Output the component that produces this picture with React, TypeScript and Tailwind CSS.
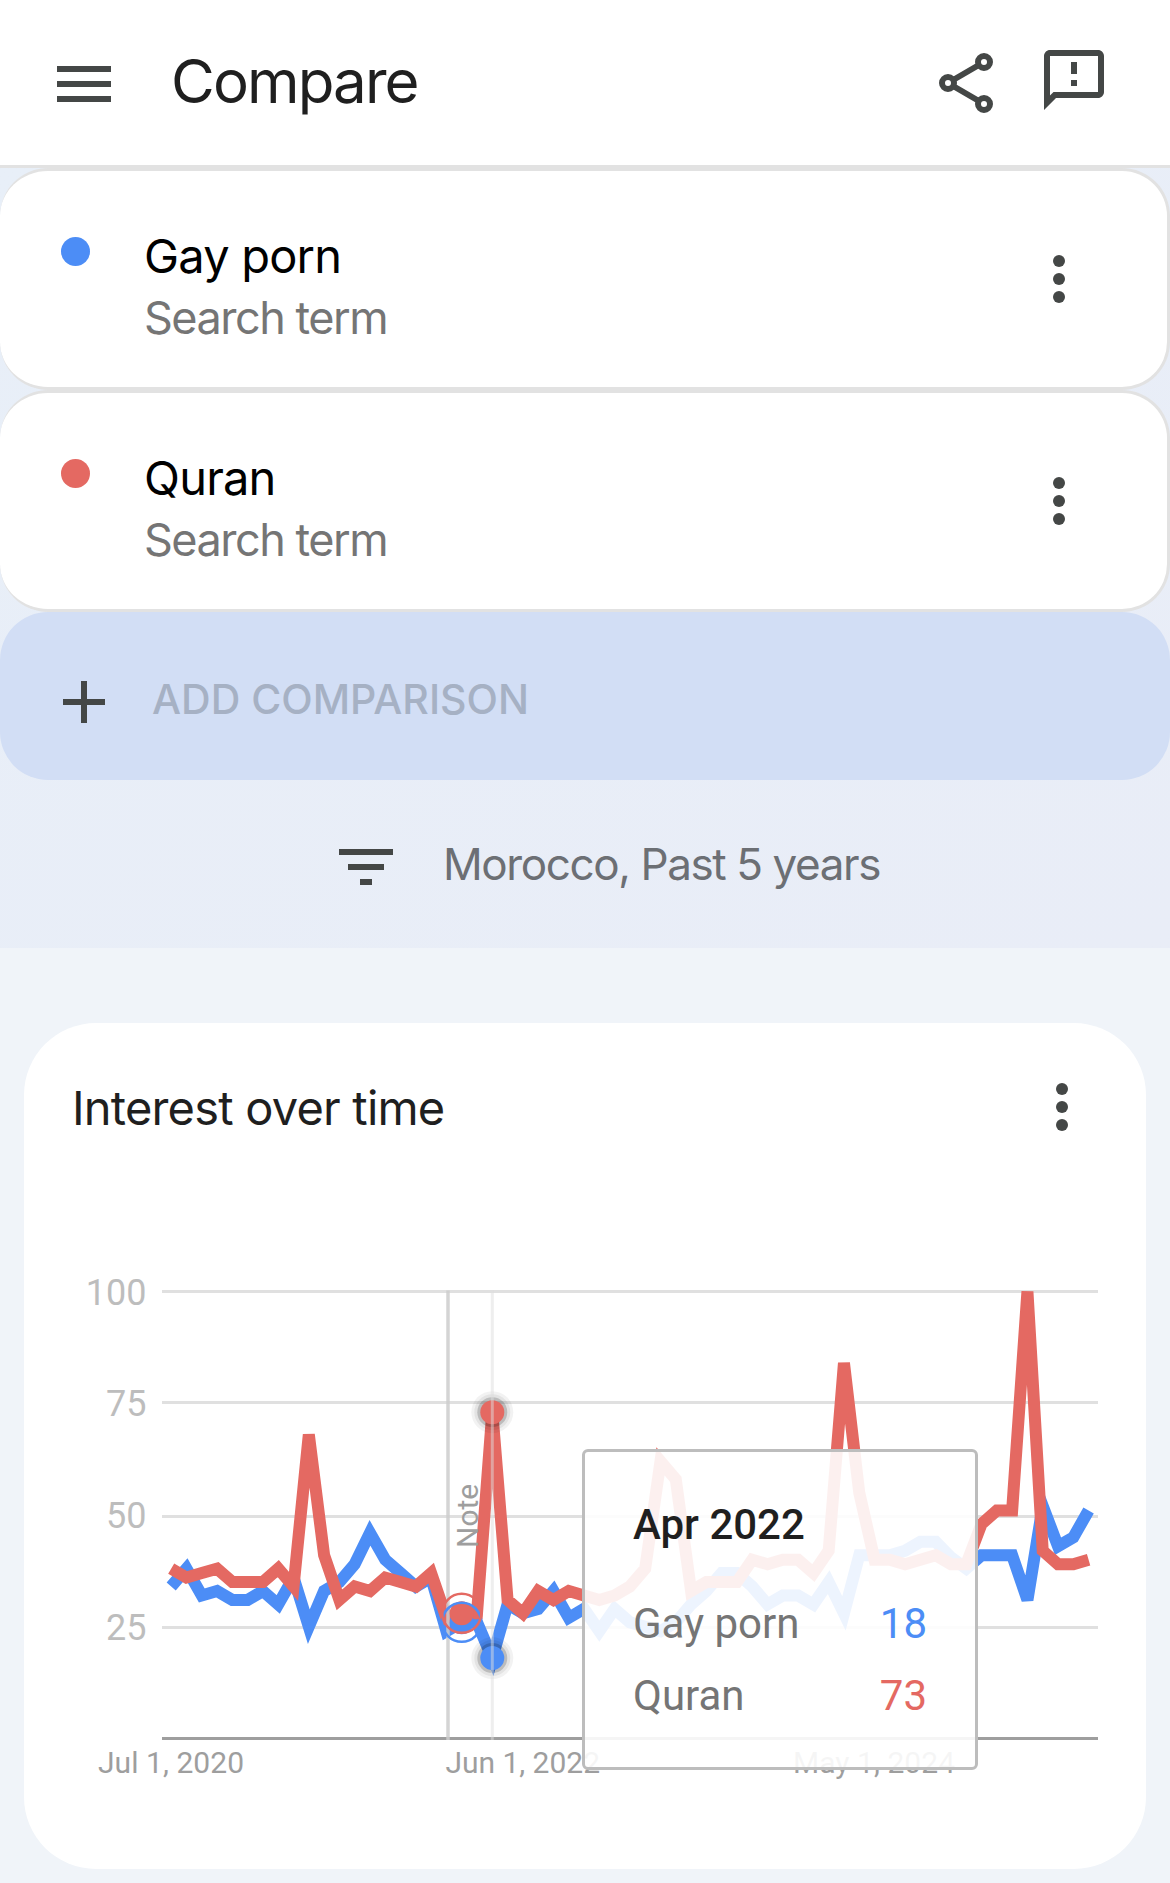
import React, { ReactNode } from 'react';

interface Term {
  name: string;
  dot: string;
}

const BLUE = '#4c8df6';
const RED = '#e46962';

const terms: Term[] = [
  { name: 'Gay porn', dot: 'bg-[#4c8df6]' },
  { name: 'Quran', dot: 'bg-[#e46962]' },
];

// Monthly values, Jul 2020 - Jul 2025
const blueSeries = [
  34, 38, 32, 33, 31, 31, 33, 30, 36, 25, 33, 35, 39, 46, 40, 37, 34, 36, 24, 26,
  26, 18, 30, 28, 29, 33, 27, 29, 24, 29, 26, 25, 24, 26, 30, 33, 37, 37, 34, 30,
  32, 32, 30, 35, 28, 41, 41, 41, 42, 44, 44, 40.5, 38, 41, 41, 41, 31, 52, 43, 45, 51,
];
const redSeries = [
  38, 36, 37, 38, 35, 35, 35, 38, 34, 68, 41, 31, 34, 33, 36, 35, 34, 37, 27, 28,
  28, 73, 31, 28, 33, 31, 33, 32, 31, 32, 34, 38, 62, 58, 33, 35, 35, 35, 40, 39,
  40, 40, 37, 42, 84, 55, 40, 40, 39, 40, 41, 39, 39, 48, 51, 51, 100, 42, 39, 39, 40,
];

const gridLines = [
  { label: '100', y: 31.5, text: 45 },
  { label: '75', y: 142.5, text: 156 },
  { label: '50', y: 256.5, text: 268 },
  { label: '25', y: 367.5, text: 380 },
];

const px = (i: number) => 147.2 + i * 15.29;
const py = (v: number) => 478.5 - v * 4.47;
const toPoints = (series: number[]) => series.map((v, i) => `${px(i)},${py(v)}`).join(' ');

function Icon({ children }: { children: ReactNode }) {
  return (
    <svg className="size-[72px] shrink-0" viewBox="0 0 24 24" fill="#444746">
      {children}
    </svg>
  );
}

function MoreIcon() {
  return (
    <Icon>
      <circle cx="12" cy="6" r="2" />
      <circle cx="12" cy="12" r="2" />
      <circle cx="12" cy="18" r="2" />
    </Icon>
  );
}

function Header() {
  return (
    <header className="flex h-[168px] items-start border-b-[3px] border-[#e2e2e2] bg-white pl-12 pr-15">
      <button className="mt-12" aria-label="Menu">
        <Icon>
          <path d="M3 6h18v2H3zM3 11h18v2H3zM3 16h18v2H3z" />
        </Icon>
      </button>
      <h1 className="ml-[51px] mt-[45px] text-[60px] leading-[72px] tracking-[-1.9px] text-[#1f1f1f]">Compare</h1>
      <div className="ml-auto flex items-start gap-9">
        <button className="mt-[47px]" aria-label="Share">
          <Icon>
            <g fill="none" stroke="#444746" strokeWidth="2">
              <path d="M7.7 11l8.6-5M7.7 13l8.6 5" />
              <circle cx="18" cy="5" r="2" />
              <circle cx="6" cy="12" r="2" />
              <circle cx="18" cy="19" r="2" />
            </g>
          </Icon>
        </button>
        <button className="mt-11" aria-label="Feedback">
          <Icon>
            <path d="M20 2H4c-1.1 0-2 .9-2 2v18l4-4h14c1.1 0 2-.9 2-2V4c0-1.1-.9-2-2-2zm0 14H5.17L4 17.17V4h16v12zM11 6h2v4h-2zM11 12h2v2h-2z" />
          </Icon>
        </button>
      </div>
    </header>
  );
}

function TermCard({ term }: { term: Term }) {
  return (
    <div className="flex h-[222px] items-start rounded-[48px] border-y-[3px] border-r-[3px] border-[#e2e2e2] bg-white pl-[61px] pr-18">
      <span className={`mt-[66px] size-[29px] rounded-full ${term.dot}`} />
      <div className="ml-[54px] mt-[54px]">
        <div className="text-[47px] leading-[62px] tracking-[-0.8px] text-black">{term.name}</div>
        <div className="text-[45px] leading-[62px] tracking-[-1.5px] text-[#757575]">Search term</div>
      </div>
      <button className="ml-auto mt-18" aria-label="More options">
        <MoreIcon />
      </button>
    </div>
  );
}

function Marker({ x, y, color }: { x: number; y: number; color: string }) {
  return (
    <g>
      <circle cx={x} cy={y} r="21" fillOpacity="0.05" />
      <circle cx={x} cy={y} r="18" fillOpacity="0.06" />
      <circle cx={x} cy={y} r="15" fillOpacity="0.17" />
      <circle cx={x} cy={y} r="12" fill={color} />
    </g>
  );
}

function Chart() {
  return (
    <svg className="block h-[560px] w-[1122px]" viewBox="0 0 1122 560" fontFamily="Roboto, sans-serif">
      {gridLines.map((line) => (
        <g key={line.label}>
          <path d={`M138 ${line.y}H1074`} stroke="#e0e0e0" strokeWidth="3" />
          <text x="122.5" y={line.text} textAnchor="end" fontSize="36" fill="#bdbdbd">{line.label}</text>
        </g>
      ))}
      <path d="M138 478.5H1074" stroke="#9e9e9e" strokeWidth="3" />

      <g fontSize="30" fill="#9e9e9e">
        <text x="74" y="513" textLength="146">Jul 1, 2020</text>
        <text x="421.5" y="513" textLength="154.5">Jun 1, 2022</text>
        <text x="769" y="513" textLength="162">May 1, 2024</text>
      </g>

      <g fill="none" strokeWidth="12">
        <polyline points={toPoints(blueSeries)} stroke={BLUE} />
        <polyline points={toPoints(redSeries)} stroke={RED} />
      </g>

      {/* note marker */}
      <path d="M424 30.5V480" stroke="#cccccc" strokeOpacity="0.85" strokeWidth="3.5" />
      <text transform="translate(454 288) rotate(-90)" fontSize="30" fill="#9e9e9e">Note</text>
      <circle cx={px(19)} cy={py(26)} r="12" fill={BLUE} />
      <circle cx={px(19)} cy={py(28)} r="12" fill={RED} />
      <circle cx={px(19)} cy={py(26)} r="19.5" fill="none" stroke={BLUE} strokeWidth="2.5" />
      <circle cx={px(19)} cy={py(28)} r="19.5" fill="none" stroke={RED} strokeWidth="2.5" />

      {/* selected month */}
      <Marker x={px(21)} y={py(18)} color={BLUE} />
      <Marker x={px(21)} y={py(73)} color={RED} />
      <path d={`M${px(21)} 30V480`} stroke="#dddddd" strokeOpacity="0.5" strokeWidth="3" />
    </svg>
  );
}

function Tooltip() {
  return (
    <div className="absolute left-[558px] top-[189px] h-[321px] w-[396px] rounded-md border-[3px] border-[#bdbdbd] bg-white/90 px-12 pt-[43px] font-[Roboto,sans-serif] text-[42px]">
      <div className="leading-[60px] font-medium text-[#1f1f1f]">Apr 2022</div>
      <div className="mt-[39px] flex justify-between leading-[60px] text-[#757575]">
        <span>Gay porn</span>
        <span className="text-[#4c8df6]">18</span>
      </div>
      <div className="mt-3 flex justify-between leading-[60px] text-[#757575]">
        <span>Quran</span>
        <span className="text-[#e46962]">73</span>
      </div>
    </div>
  );
}

export default function App() {
  return (
    <div className="h-[1883px] w-[1170px] overflow-hidden bg-[#f0f4f9] font-[Inter,sans-serif]">
      <Header />

      <section className="h-[780px] bg-linear-to-br from-[#e8eff8] to-[#e9edf7]">
        {terms.map((term) => (
          <TermCard key={term.name} term={term} />
        ))}
        <button className="flex h-[168px] w-full items-center rounded-[48px] bg-[#d2def5] pl-12 pt-3 pb-3">
          <span className="mt-3">
            <Icon>
              <path d="M5 11h14v2H5zM11 5h2v14h-2z" />
            </Icon>
          </span>
          <span className="ml-8 mt-1.5 text-[41px] leading-[60px] font-medium text-[#a6b1c4]">ADD COMPARISON</span>
        </button>
        <button className="flex h-[168px] w-full items-start pl-[330px]">
          <span className="mt-[51px]">
            <Icon>
              <path d="M3 6h18v2H3zM6 11h12v2H6zM10 16h4v2h-4z" />
            </Icon>
          </span>
          <span className="ml-[41px] mt-[54px] text-[44px] leading-[60px] tracking-[-1.4px] text-[#6c6f74]">Morocco, Past 5 years</span>
        </button>
      </section>

      <main className="mx-6 mt-[75px] h-[846px] rounded-[72px] bg-white">
        <div className="flex h-[237px] items-start justify-between pl-12 pr-12 pt-12">
          <h2 className="mt-[7px] text-[47px] leading-[60px] tracking-[-0.8px] text-[#1f1f1f]">Interest over time</h2>
          <button aria-label="More options">
            <MoreIcon />
          </button>
        </div>
        <div className="relative">
          <Chart />
          <Tooltip />
        </div>
      </main>
    </div>
  );
}
